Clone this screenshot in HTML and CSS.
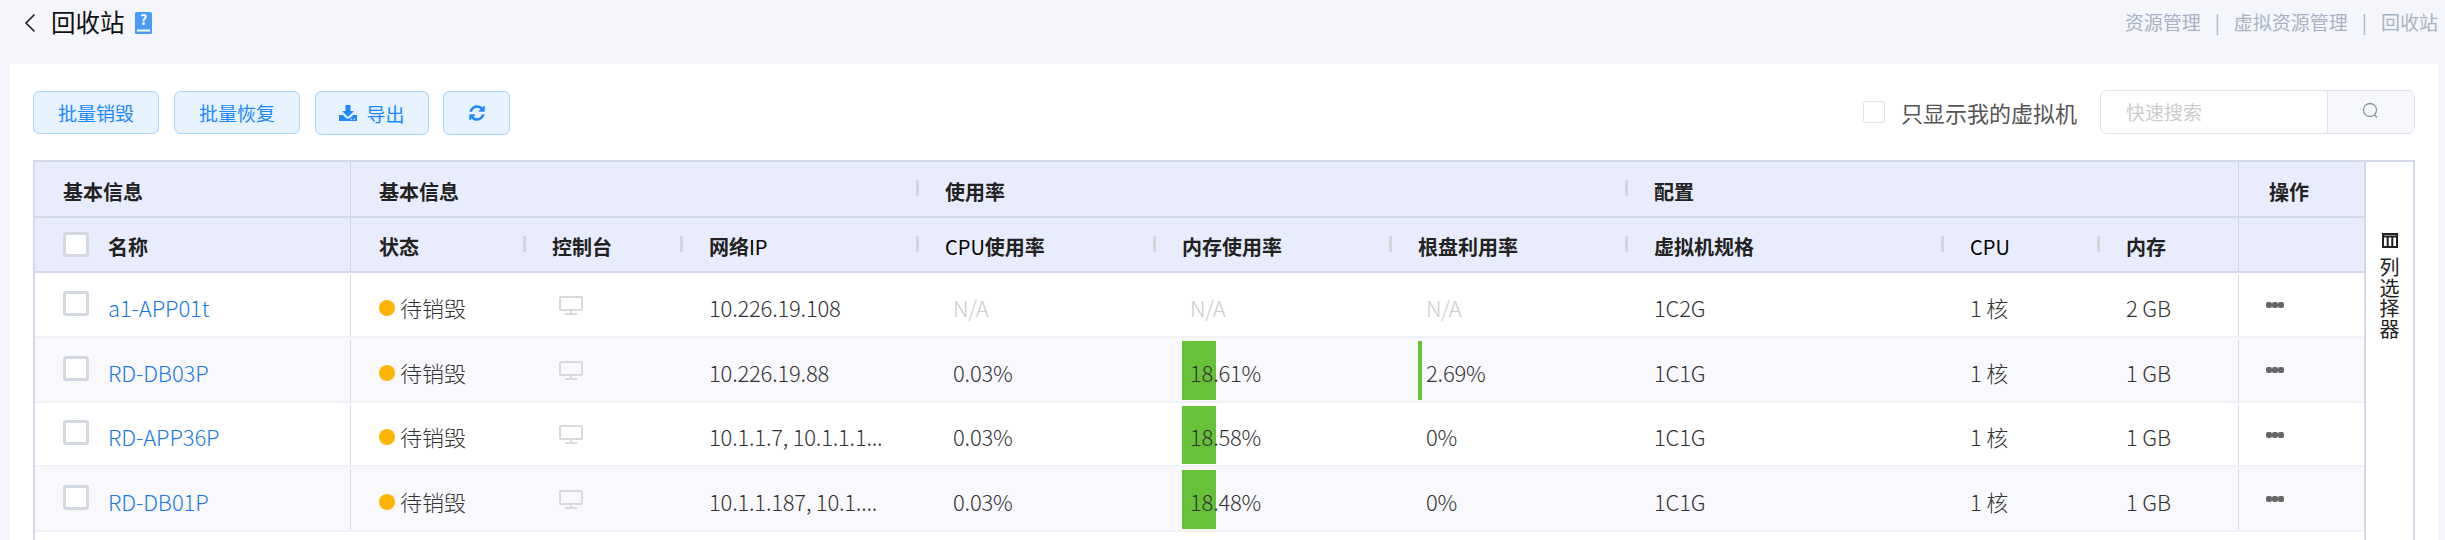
FILE: index.html
```html
<!DOCTYPE html>
<html lang="zh-CN">
<head>
  <meta charset="UTF-8" />
  <title>回收站</title>
  <link rel="stylesheet" href="styles.css">
</head>
<body>

<header class="page-head">
  <div class="title-box">
    <svg class="back-icon" width="12" height="20" viewBox="0 0 12 20"><path d="M10.500 1.500 2 10l8.500 8.500" fill="none" stroke="#222" stroke-width="1.600"/></svg>
    <h1>回收站</h1>
    <svg class="help-icon" width="17" height="22" viewBox="0 0 17 22">
      <rect width="17" height="22" rx="1.500" fill="#4a9bf5"/>
      <rect x="2" y="17.500" width="13" height="2" fill="#fff"/>
      <text x="8.500" y="13" text-anchor="middle" class="help-mark">?</text>
    </svg>
  </div>
  <nav class="crumbs">
    <a href="#">资源管理</a><span>|</span><a href="#">虚拟资源管理</a><span>|</span><a href="#">回收站</a>
  </nav>
</header>

<main class="card">
  <div class="toolbar">
    <button class="btn btn-wide">批量销毁</button>
    <button class="btn btn-wide">批量恢复</button>
    <button class="btn btn-tall btn-export">
      <svg width="18" height="16" viewBox="0 0 18 16">
        <path d="M6.500 0h5v6h3.500L9 12 3 6h3.500z" fill="#1e88ff"/>
        <path d="M0 10h4l3.500 3.500h3L14 10h4v6H0z" fill="#1e88ff"/>
        <circle cx="12.500" cy="14.200" r=".8" fill="#e6f3ff"/>
        <circle cx="15.300" cy="14.200" r=".8" fill="#e6f3ff"/>
      </svg>
      导出
    </button>
    <button class="btn btn-tall btn-refresh">
      <svg width="18" height="18" viewBox="0 0 1792 1792"><path fill="#1e88ff" d="M1639 1056q0 5-1 7-64 268-268 434.500t-478 166.500q-146 0-282.500-55t-243.500-157l-129 129q-19 19-45 19t-45-19-19-45v-448q0-26 19-45t45-19h448q26 0 45 19t19 45-19 45l-137 137q71 66 161 102t187 36q134 0 250-65t186-179q11-17 53-117 8-23 30-23h192q13 0 22.500 9.500t9.500 22.500zm25-800v448q0 26-19 45t-45 19h-448q-26 0-45-19t-19-45 19-45l138-138q-148-137-349-137-134 0-250 65t-186 179q-11 17-53 117-8 23-30 23h-199q-13 0-22.500-9.500t-9.500-22.500v-7q65-268 270-434.500t480-166.500q146 0 284 55.500t245 156.500l130-129q19-19 45-19t45 19 19 45z"/></svg>
    </button>
    <label class="only-mine"><span class="small-check"></span>只显示我的虚拟机</label>
    <div class="search">
      <span class="search-input">快速搜索</span>
      <span class="search-btn">
        <svg width="18" height="18" viewBox="0 0 18 18"><circle cx="8" cy="8" r="6.500" fill="none" stroke="#8d96a5" stroke-width="1.300"/><path d="M12.500 12.800 15 15.500" stroke="#8d96a5" stroke-width="1.300"/></svg>
      </span>
    </div>
  </div>

  <div class="table-wrap">
    <table class="vm-table">
      <colgroup>
        <col class="c-name"><col class="c-status"><col class="c-console"><col class="c-ip">
        <col class="c-cpu-rate"><col class="c-rate"><col class="c-rate">
        <col class="c-spec"><col class="c-cpu"><col class="c-mem"><col class="c-op">
      </colgroup>
      <thead>
        <tr class="head-top">
          <th class="first">基本信息</th>
          <th colspan="3" class="line">基本信息</th>
          <th colspan="3" class="sep">使用率</th>
          <th colspan="3" class="sep">配置</th>
          <th class="line op-head">操作</th>
        </tr>
        <tr class="head-sub">
          <th class="first"><div class="name-cell"><span class="check"></span>名称</div></th>
          <th class="line">状态</th>
          <th class="sep">控制台</th>
          <th class="sep">网络<span class="lat">IP</span></th>
          <th class="sep"><span class="lat">CPU</span>使用率</th>
          <th class="sep">内存使用率</th>
          <th class="sep">根盘利用率</th>
          <th class="sep">虚拟机规格</th>
          <th class="sep"><span class="lat">CPU</span></th>
          <th class="sep">内存</th>
          <th class="line"></th>
        </tr>
      </thead>
      <tbody>
        <tr class="row-a">
          <td class="first"><div class="name-cell"><span class="check"></span><a href="#">a1-APP01t</a></div></td>
          <td class="line"><span class="status"><i></i>待销毁</span></td>
          <td><svg class="screen" width="24" height="19" viewBox="0 0 24 19"><rect x="1" y="1" width="22" height="13" rx="1" fill="none" stroke="#d6d9de" stroke-width="2"/><path d="M12 14v3M6 18h12" stroke="#d6d9de" stroke-width="2"/></svg></td>
          <td class="num">10.226.19.108</td>
          <td class="num rate na">N/A</td>
          <td class="num rate na">N/A</td>
          <td class="num rate na">N/A</td>
          <td class="num">1C2G</td>
          <td class="num">1 核</td>
          <td class="num">2 GB</td>
          <td class="line"><span class="more"><i></i><i></i><i></i></span></td>
        </tr>
        <tr class="row-b">
          <td class="first"><div class="name-cell"><span class="check"></span><a href="#">RD-DB03P</a></div></td>
          <td class="line"><span class="status"><i></i>待销毁</span></td>
          <td><svg class="screen" width="24" height="19" viewBox="0 0 24 19"><rect x="1" y="1" width="22" height="13" rx="1" fill="none" stroke="#d6d9de" stroke-width="2"/><path d="M12 14v3M6 18h12" stroke="#d6d9de" stroke-width="2"/></svg></td>
          <td class="num">10.226.19.88</td>
          <td class="num rate">0.03%</td>
          <td class="num rate"><span class="bar" style="width: 34px"></span><span class="val">18.61%</span></td>
          <td class="num rate"><span class="bar" style="width: 4px"></span><span class="val">2.69%</span></td>
          <td class="num">1C1G</td>
          <td class="num">1 核</td>
          <td class="num">1 GB</td>
          <td class="line"><span class="more"><i></i><i></i><i></i></span></td>
        </tr>
        <tr class="row-c">
          <td class="first"><div class="name-cell"><span class="check"></span><a href="#">RD-APP36P</a></div></td>
          <td class="line"><span class="status"><i></i>待销毁</span></td>
          <td><svg class="screen" width="24" height="19" viewBox="0 0 24 19"><rect x="1" y="1" width="22" height="13" rx="1" fill="none" stroke="#d6d9de" stroke-width="2"/><path d="M12 14v3M6 18h12" stroke="#d6d9de" stroke-width="2"/></svg></td>
          <td class="num">10.1.1.7, 10.1.1.1...</td>
          <td class="num rate">0.03%</td>
          <td class="num rate"><span class="bar" style="width: 34px"></span><span class="val">18.58%</span></td>
          <td class="num rate">0%</td>
          <td class="num">1C1G</td>
          <td class="num">1 核</td>
          <td class="num">1 GB</td>
          <td class="line"><span class="more"><i></i><i></i><i></i></span></td>
        </tr>
        <tr class="row-d">
          <td class="first"><div class="name-cell"><span class="check"></span><a href="#">RD-DB01P</a></div></td>
          <td class="line"><span class="status"><i></i>待销毁</span></td>
          <td><svg class="screen" width="24" height="19" viewBox="0 0 24 19"><rect x="1" y="1" width="22" height="13" rx="1" fill="none" stroke="#d6d9de" stroke-width="2"/><path d="M12 14v3M6 18h12" stroke="#d6d9de" stroke-width="2"/></svg></td>
          <td class="num">10.1.1.187, 10.1....</td>
          <td class="num rate">0.03%</td>
          <td class="num rate"><span class="bar" style="width: 34px"></span><span class="val">18.48%</span></td>
          <td class="num rate">0%</td>
          <td class="num">1C1G</td>
          <td class="num">1 核</td>
          <td class="num">1 GB</td>
          <td class="line"><span class="more"><i></i><i></i><i></i></span></td>
        </tr>
      </tbody>
    </table>

    <aside class="col-picker">
      <svg width="16" height="15" viewBox="0 0 16 15"><path d="M1 1h14v13H1zM1 3.500h14M5.700 3.500V14M10.300 3.500V14" fill="none" stroke="#222" stroke-width="2"/></svg>
      <span>列选择器</span>
    </aside>
  </div>
</main>

</body>
</html>
```

FILE: styles.css
```css
* {
  box-sizing: border-box;
}

html, body {
  height: 540px;
  overflow: hidden;
}

body {
  margin: 0;
  background-color: #f5f6fb;
  color: #333;
  font-family: "Noto Sans CJK SC", "Noto Sans", sans-serif;
}

.page-head {
  display: flex;
  justify-content: space-between;
  height: 64px;
  padding: 4px 7px 0 24px;
}

.title-box {
  display: flex;
  align-items: flex-start;
}

.back-icon {
  margin-top: 9px;
}

.title-box h1 {
  margin: 0 0 0 15px;
  font-size: 24.500px;
  font-weight: 400;
  line-height: 36px;
  color: #111;
}

.help-icon {
  margin: 8px 0 0 10px;
}

.help-mark {
  font-size: 14px;
  font-weight: 700;
  fill: #fff;
}

.crumbs {
  display: flex;
  gap: 14px;
  padding-top: 5px;
  font-size: 19px;
  line-height: 26px;
  color: #a9b2c3;
}

.crumbs a {
  color: #a9b2c3;
  text-decoration: none;
}

.card {
  height: 476px;
  margin: 0 7px 0 10px;
  padding: 26px 23px 0;
  background-color: #fff;
}

.toolbar {
  display: flex;
  align-items: flex-start;
  height: 70px;
}

.btn {
  display: flex;
  align-items: center;
  justify-content: center;
  gap: 9px;
  margin-top: 1px;
  padding: 0;
  background-color: #e6f3ff;
  border: 1px solid #a9d5ff;
  border-radius: 6px;
  color: #1e88ff;
  font: inherit;
  font-size: 19px;
  cursor: pointer;
}

.btn-wide {
  width: 126px;
  height: 43px;
  margin-right: 15px;
}

.btn-tall {
  height: 44px;
}

.btn-export {
  width: 114px;
  margin-right: 14px;
}

.btn-refresh {
  width: 67px;
}

.only-mine {
  display: flex;
  align-items: center;
  gap: 16px;
  height: 44px;
  margin: 0 23px 0 auto;
  font-size: 22px;
  color: #555;
}

.small-check {
  width: 22px;
  height: 22px;
  border: 1px solid #dfe1e6;
  border-radius: 3px;
  background-color: #fff;
}

.search {
  display: flex;
  width: 315px;
  height: 44px;
  border: 1px solid #dfe1ea;
  border-radius: 7px;
  overflow: hidden;
}

.search-input {
  flex: 1;
  padding: 8px 0 0 25px;
  font-size: 19px;
  line-height: 26px;
  color: #ccc;
}

.search-btn {
  display: flex;
  align-items: center;
  justify-content: center;
  width: 87px;
  padding-bottom: 3px;
  background-color: #f6f7fb;
  border-left: 1px solid #dfe1ea;
}

.table-wrap {
  display: flex;
  height: 380px;
  border-top: 2px solid #d3d8ea;
  border-left: 2px solid #d3d8ea;
}

.vm-table {
  width: 2329px;
  height: 370px;
  flex: none;
  align-self: flex-start;
  border-collapse: separate;
  border-spacing: 0;
  table-layout: fixed;
}

.c-name { width: 315px; }
.c-status { width: 173px; }
.c-console { width: 157px; }
.c-ip { width: 236px; }
.c-cpu-rate { width: 237px; }
.c-rate { width: 236px; }
.c-spec { width: 316px; }
.c-cpu { width: 156px; }
.c-mem { width: 141px; }
.c-op { width: 126px; }

th, td {
  position: relative;
  padding: 4px 0 0 29px;
  text-align: left;
  white-space: nowrap;
}

th {
  background-color: #e8ecfc;
  border-bottom: 2px solid #d3d8ea;
  font-size: 20px;
  font-weight: 700;
  color: #222;
}

th .lat {
  font-weight: 400;
  color: #000;
}

.head-top th {
  height: 56px;
}

.head-sub th {
  height: 55px;
}

th.first, td.first {
  padding-left: 28px;
}

.name-cell {
  display: flex;
  align-items: center;
  gap: 19px;
}

td.first .name-cell .check {
  margin-top: -7px;
}

th.first .name-cell .check {
  margin-top: -4px;
}

.check {
  flex: none;
  width: 26px;
  height: 25px;
  border: 3px solid #d3d8e2;
  border-radius: 3px;
  background-color: #fff;
}

/* grey tick between header cells */
th.sep::before {
  content: "";
  position: absolute;
  left: 0;
  top: 50%;
  width: 3px;
  height: 16px;
  margin-top: -9px;
  background-color: #d3d6dd;
}

/* full height rule in front of a cell */
.line::before {
  content: "";
  position: absolute;
  left: 0;
  top: 2px;
  bottom: 0;
  width: 1px;
  background-color: #d8dbe3;
}

th.line::before {
  top: 0;
  background-color: #d3d8ea;
}

.op-head {
  padding-left: 31px;
}

td {
  font-size: 22px;
  font-weight: 300;
  border-bottom: 2px solid #f1f2f8;
  color: #333;
}

tr.row-a td { height: 65px; }
tr.row-b td { height: 65px; }
tr.row-c td { height: 64px; }
tr.row-d td { height: 65px; }

tr.row-b td, tr.row-d td {
  background-color: #f8f8fd;
}

td a {
  color: #1a78e6;
  text-decoration: none;
  font-size: 22px;
  letter-spacing: -0.100px;
}

.status {
  display: flex;
  align-items: center;
  gap: 5px;
}

.status i {
  width: 16px;
  height: 16px;
  margin-top: 2px;
  border-radius: 50%;
  background-color: #ffb400;
}

td .screen {
  display: block;
  margin: -3px 0 0 7px;
}

.num {
  font-size: 22px;
  letter-spacing: -0.200px;
}

.rate {
  padding-left: 37px;
}

td.na {
  color: #ccc;
}

.bar {
  position: absolute;
  left: 29px;
  top: 3px;
  bottom: 1px;
  background-color: #67c23a;
}

.val {
  position: relative;
}

.more {
  display: flex;
  margin: -3px 0 0 -1px;
}

.more i {
  width: 6px;
  height: 6px;
  border-radius: 2px;
  background-color: #666;
}

.col-picker {
  display: flex;
  flex-direction: column;
  align-items: center;
  width: 51px;
  padding-top: 71px;
  border-left: 2px solid #d3d8ea;
  border-right: 2px solid #d3d8ea;
  font-size: 20px;
  line-height: 20.500px;
  color: #222;
}

.col-picker svg {
  margin-bottom: 9px;
}

.col-picker span {
  width: 20px;
}
```
